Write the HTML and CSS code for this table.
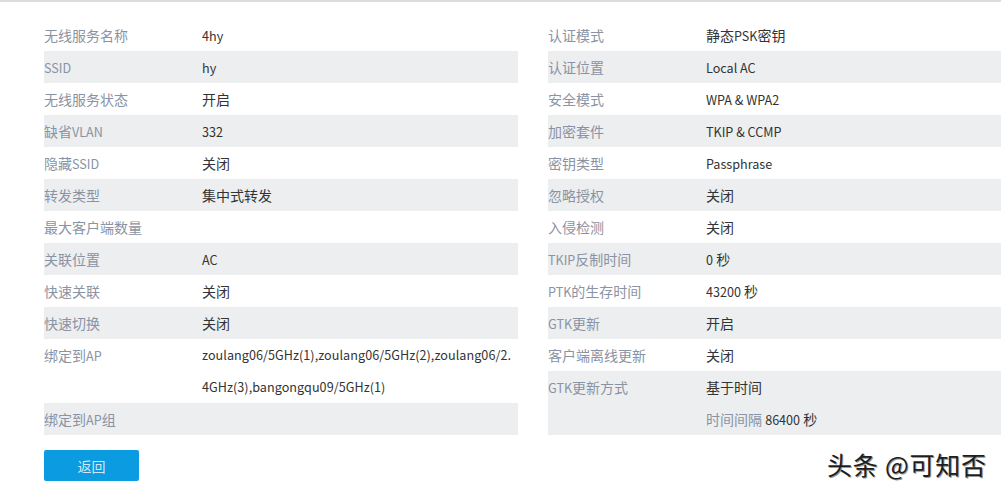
FILE: index.html
```html
<!DOCTYPE html>
<html lang="zh">
<head>
<meta charset="utf-8">
<link rel="stylesheet" href="styles.css">
</head>
<body>
<div class="page">
  <div class="tables">
    <div class="table left">
      <div class="row"><div class="k">无线服务名称</div><div class="v"><span class="en">4hy</span></div></div>
      <div class="row alt"><div class="k"><span class="en">SSID</span></div><div class="v"><span class="en">hy</span></div></div>
      <div class="row"><div class="k">无线服务状态</div><div class="v">开启</div></div>
      <div class="row alt"><div class="k">缺省<span class="en">VLAN</span></div><div class="v"><span class="en">332</span></div></div>
      <div class="row"><div class="k">隐藏<span class="en">SSID</span></div><div class="v">关闭</div></div>
      <div class="row alt"><div class="k">转发类型</div><div class="v">集中式转发</div></div>
      <div class="row"><div class="k">最大客户端数量</div><div class="v"></div></div>
      <div class="row alt"><div class="k">关联位置</div><div class="v"><span class="en">AC</span></div></div>
      <div class="row"><div class="k">快速关联</div><div class="v">关闭</div></div>
      <div class="row alt"><div class="k">快速切换</div><div class="v">关闭</div></div>
      <div class="row"><div class="k">绑定到<span class="en">AP</span></div><div class="v wrap">zoulang06/5GHz(1),zoulang06/5GHz(2),zoulang06/2.4GHz(3),bangongqu09/5GHz(1)</div></div>
      <div class="row alt"><div class="k">绑定到<span class="en">AP</span>组</div><div class="v"></div></div>
    </div>
    <div class="table right">
      <div class="row"><div class="k">认证模式</div><div class="v">静态<span class="en">PSK</span>密钥</div></div>
      <div class="row alt"><div class="k">认证位置</div><div class="v"><span class="en">Local AC</span></div></div>
      <div class="row"><div class="k">安全模式</div><div class="v"><span class="en">WPA &amp; WPA2</span></div></div>
      <div class="row alt"><div class="k">加密套件</div><div class="v"><span class="en">TKIP &amp; CCMP</span></div></div>
      <div class="row"><div class="k">密钥类型</div><div class="v"><span class="en">Passphrase</span></div></div>
      <div class="row alt"><div class="k">忽略授权</div><div class="v">关闭</div></div>
      <div class="row"><div class="k">入侵检测</div><div class="v">关闭</div></div>
      <div class="row alt"><div class="k"><span class="en">TKIP</span>反制时间</div><div class="v"><span class="en">0</span> 秒</div></div>
      <div class="row"><div class="k"><span class="en">PTK</span>的生存时间</div><div class="v"><span class="en">43200</span> 秒</div></div>
      <div class="row alt"><div class="k"><span class="en">GTK</span>更新</div><div class="v">开启</div></div>
      <div class="row"><div class="k">客户端离线更新</div><div class="v">关闭</div></div>
      <div class="row alt"><div class="k"><span class="en">GTK</span>更新方式</div><div class="v"><div>基于时间</div><div><span class="sub">时间间隔</span> <span class="en">86400</span> 秒</div></div></div>
    </div>
  </div>
  <button class="btn">返回</button>
  <div class="mark">头条 @可知否</div>
</div>
</body>
</html>
```
FILE: styles.css
```css
html, body {
  margin: 0;
  padding: 0;
  background: #fff;
}
body {
  font-family: "Noto Sans CJK SC", "Noto Sans", sans-serif;
  font-size: 14px;
  color: #333;
}
.page {
  position: relative;
  width: 1001px;
  height: 492px;
  border-top: 2px solid #dcdcdc;
  box-sizing: border-box;
  padding: 17px 0 0 44px;
}
.tables {
  display: flex;
  gap: 30px;
  align-items: flex-start;
}
.table.left { width: 474px; }
.table.right { flex: 1; }
.row {
  display: grid;
  grid-template-columns: 158px 1fr;
  line-height: 32px;
}
.row.alt { background: #eceef0; }
.k { color: #8a93a3; white-space: nowrap; }
.v { color: #333; }
.en { font-size: 12.6px; line-height: 1; }
.v.wrap {
  font-size: 12.6px;
  letter-spacing: 0.05px;
  padding-right: 5px;
  word-break: break-all;
}
.sub { color: #8a93a3; }
.btn {
  display: block;
  margin-top: 15px;
  width: 95px;
  height: 31px;
  border: none;
  border-radius: 2px;
  background: #0b9be0;
  color: #cfe8f7;
  font-family: "Noto Sans CJK SC", sans-serif;
  font-size: 14px;
  padding: 0;
}
.mark {
  position: absolute;
  left: 827px;
  top: 442px;
  font-family: "Noto Sans CJK SC", sans-serif;
  font-size: 25px;
  line-height: 40px;
  color: #1e1e1e;
  letter-spacing: 0.8px;
  text-shadow: 1px 1px 0 #9a9a9a, -1px -1px 0 #fff;
}
```
